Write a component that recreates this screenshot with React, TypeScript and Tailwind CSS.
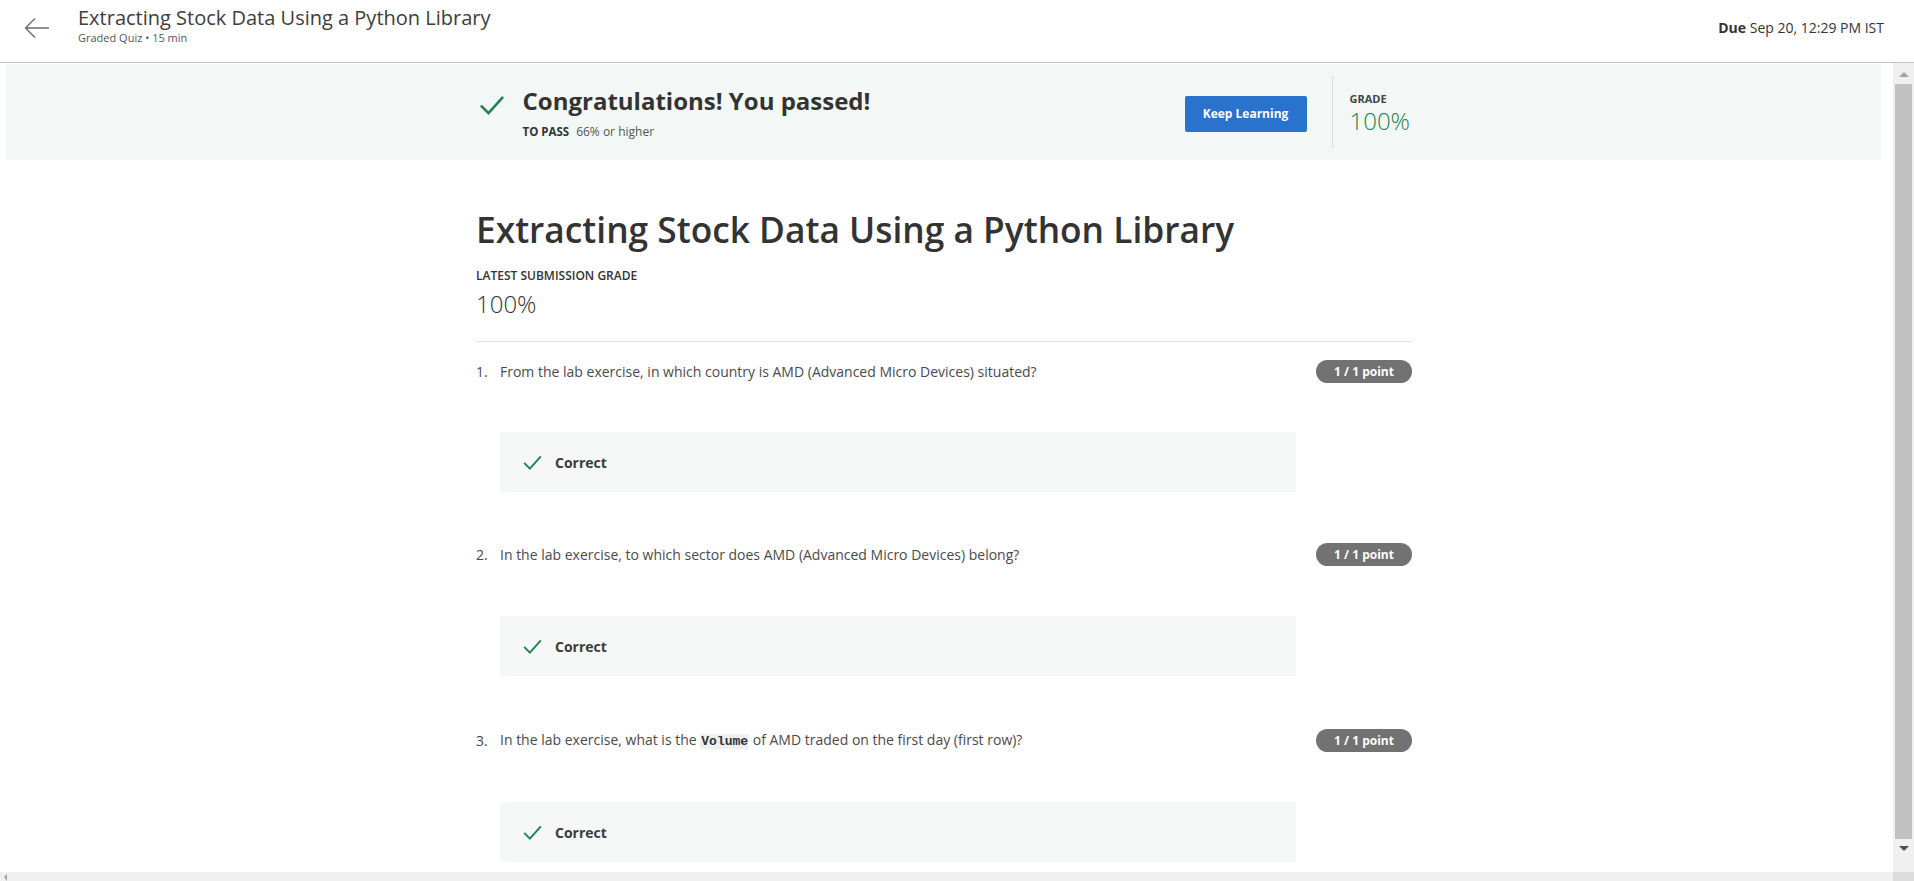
import React from "react";

const Check = ({ size = 20, className = "" }: { size?: number; className?: string }) => (
  <svg width={size} height={size} viewBox="0 0 24 24" className={className} fill="none">
    <path d="M2.5 12.5 L9 19 L21.5 5" stroke="#1f8354" strokeWidth="2.2" strokeLinecap="butt" strokeLinejoin="miter" />
  </svg>
);

const Question = ({
  n,
  children,
  mb = "mb-[53px]",
  mt = "mt-[50px]",
}: {
  n: number;
  children: React.ReactNode;
  mb?: string;
  mt?: string;
}) => (
  <div className={mb}>
    <div className="flex h-[23px] items-center">
      <div className="w-[24px] text-[14px] text-[#4a4a4a]">{n}.</div>
      <div className="flex-1 text-[14px] text-[#4a4a4a]">{children}</div>
      <div className="flex h-[23px] w-[96px] items-center justify-center rounded-full bg-[#727272] text-[12px] font-bold text-white">
        1 / 1 point
      </div>
    </div>
    <div className={`ml-[24px] ${mt} flex h-[60px] w-[796px] items-center bg-[#f5f8f7] pl-[22px]`}>
      <Check size={21} />
      <span className="ml-[12px] text-[14px] font-bold text-[#3c3c3c]">Correct</span>
    </div>
  </div>
);

export default function App() {
  return (
    <div className="flex h-[881px] w-[1914px] flex-col overflow-hidden bg-white font-['Open_Sans',sans-serif] text-[#333]">
      <header className="flex h-[63px] shrink-0 items-start border-b border-[#c4c4c4]">
        <div className="ml-[23px] mt-[16px]">
          <svg width="28" height="24" viewBox="0 0 28 24" fill="none">
            <path d="M26 12 H3 M12 2.5 L2.5 12 L12 21.5" stroke="#6b6b6b" strokeWidth="1.4" />
          </svg>
        </div>
        <div className="ml-[27px] mt-[5px] flex flex-col">
          <div className="text-[20px] leading-[26px] text-[#3d3d3d]">Extracting Stock Data Using a Python Library</div>
          <div className="text-[11px] leading-[14px] text-[#555]">Graded Quiz • 15 min</div>
        </div>
        <div className="ml-auto mr-[30px] mt-[17px] text-[14px] text-[#333]">
          <span className="font-bold">Due</span> Sep 20, 12:29 PM IST
        </div>
      </header>
      <div className="flex min-h-0 flex-1">
        <div className="flex min-w-0 flex-1 flex-col">
          <main className="min-h-0 flex-1 overflow-hidden pr-[5px]">
            <div className="ml-[6px] mr-[7px] mt-[1px] flex h-[96px] bg-[#f3f8f6]">
              <div className="mx-auto flex w-[936px] items-start">
                <div className="ml-[2px] mt-[27px]">
                  <Check size={28} />
                </div>
                <div className="ml-[17px] mt-[20px] flex flex-col">
                  <div className="text-[24px] font-bold leading-[34px] text-[#333]">Congratulations! You passed!</div>
                  <div className="mt-[5px] text-[12px] text-[#555]">
                    <span className="text-[11.5px] font-bold text-[#333]">TO PASS</span>
                    <span className="ml-[7px]">66% or higher</span>
                  </div>
                </div>
                <div className="ml-auto flex h-full items-center">
                  <button className="mt-[4px] flex h-[36px] w-[122px] items-center justify-center rounded-[2px] bg-[#2a73cc] text-[12px] font-bold text-white">
                    Keep Learning
                  </button>
                  <div className="ml-[25px] h-[72px] w-px bg-[#dcdcdc]" />
                  <div className="ml-[17px] flex w-[62px] flex-col self-start pt-[27px]">
                    <div className="text-[11px] font-bold leading-[16px] text-[#444]">GRADE</div>
                    <div className="text-[24px] font-light leading-[28px] text-[#1f8354]">100%</div>
                  </div>
                </div>
              </div>
            </div>
            <div className="mx-auto w-[936px]">
              <h1 className="mt-[45px] text-[35.3px] font-semibold leading-[48px] text-[#333]">
                Extracting Stock Data Using a Python Library
              </h1>
              <div className="mt-[14px] text-[12px] font-semibold uppercase text-[#333]">Latest Submission Grade</div>
              <div className="mt-[4px] text-[24px] font-light leading-[30px] text-[#333]">100%</div>
              <div className="mt-[22px] h-px bg-[#e1e1e1]" />
              <div className="mt-[18px]">
                <Question n={1} mt="mt-[49px]" mb="mb-[51px]">
                  From the lab exercise, in which country is AMD (Advanced Micro Devices) situated?
                </Question>
                <Question n={2} mt="mt-[50px]" mb="mb-[53px]">
                  In the lab exercise, to which sector does AMD (Advanced Micro Devices) belong?
                </Question>
                <Question n={3} mt="mt-[50px]">
                  In the lab exercise, what is the{" "}
                  <code className="bg-[#efefef] px-[1px] font-['Liberation_Mono',monospace] text-[13px] font-bold text-[#333]">
                    Volume
                  </code>{" "}
                  of AMD traded on the first day (first row)?
                </Question>
              </div>
            </div>
          </main>
          <div className="flex h-[9px] shrink-0 items-start bg-[#f0f0f0]">
            <svg width="8" height="9" viewBox="0 0 8 9" className="ml-[2px]">
              <path d="M2 5 L5 2 L5 9 Z" fill="#a3a3a3" />
            </svg>
          </div>
        </div>
        <div className="flex w-[21px] shrink-0 flex-col bg-[#f0f0f0]">
          <div className="flex h-[21px] items-center justify-center">
            <svg width="10" height="6" viewBox="0 0 10 6">
              <path d="M0 6 L5 1 L10 6 Z" fill="#a3a3a3" />
            </svg>
          </div>
          <div className="mx-[2px] h-[755px] bg-[#c1c1c1]" />
          <div className="flex h-[20px] items-center justify-center">
            <svg width="10" height="6" viewBox="0 0 10 6">
              <path d="M0 0 L10 0 L5 5 Z" fill="#505050" />
            </svg>
          </div>
          <div className="flex-1" />
          <div className="h-[9px] bg-[#dcdcdc]" />
        </div>
      </div>
    </div>
  );
}
